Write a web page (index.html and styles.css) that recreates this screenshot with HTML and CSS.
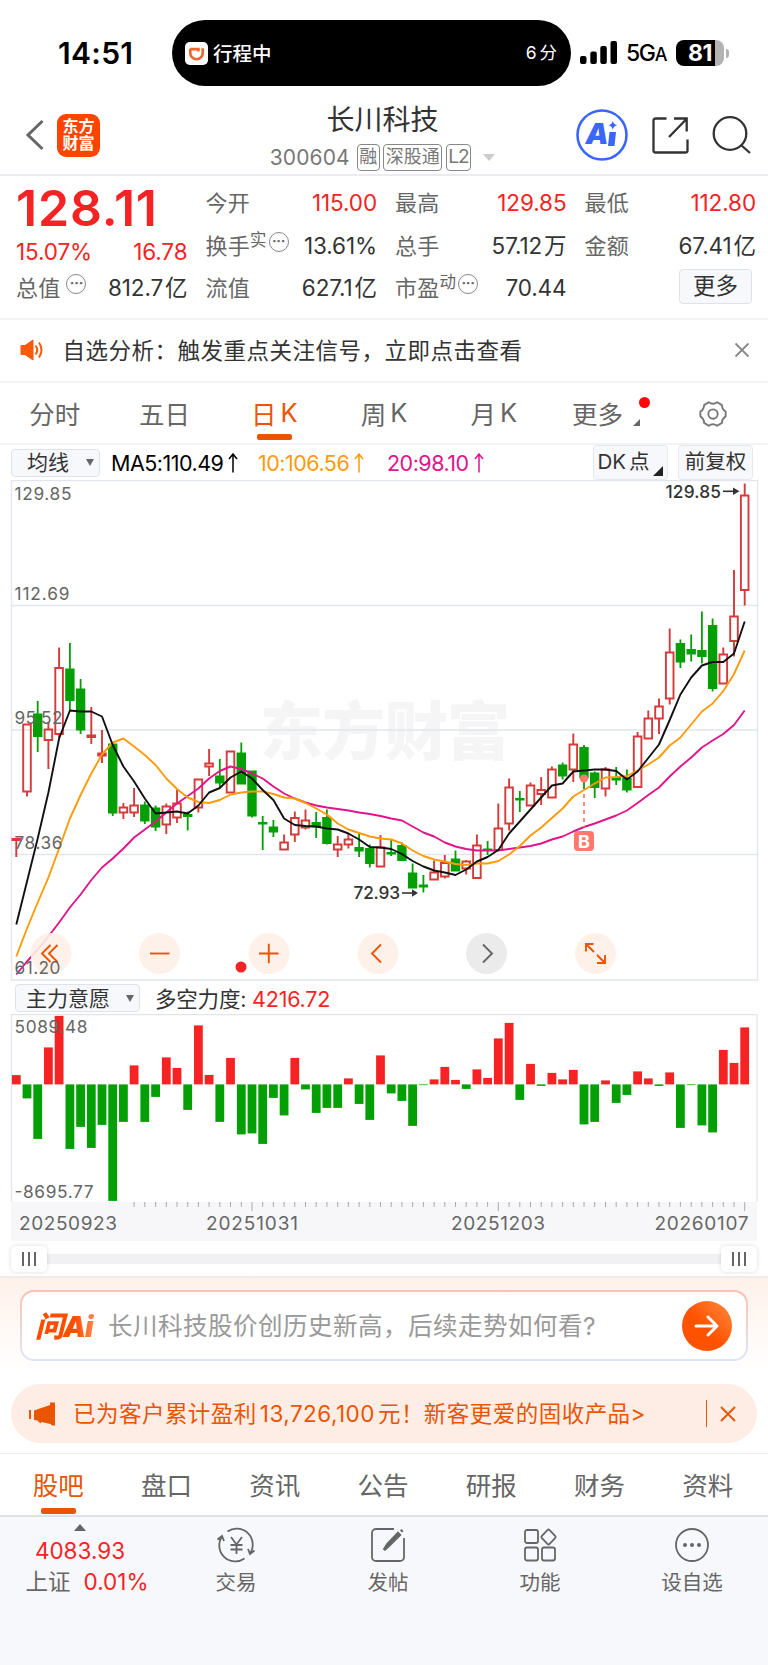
FILE: index.html
```html
<!DOCTYPE html>
<html lang="zh-CN">
<head>
  <meta charset="UTF-8" />
  <meta name="viewport" content="width=device-width, initial-scale=1" />
  <title>长川科技 300604</title>
  <link rel="stylesheet" href="styles.css">
</head>
<body>

  <!-- 状态栏 -->
  <div class="status">
    <span class="clock">14:51</span>
    <div class="island">
      <svg class="ride-icon" viewBox="0 0 24 24" width="23" height="23"><rect width="24" height="24" rx="5" fill="#fff"/><path d="M5.500 7.500H14V10M18.500 6.500V11.500a6.500 6.500 0 0 1-13 0V7" fill="none" stroke="#f0652f" stroke-width="2.800"/></svg>
      <span class="ride">行程中</span>
      <span class="eta">6<i></i>分</span>
    </div>
    <svg class="signal" viewBox="0 0 38 24" width="38" height="24"><rect x="0" y="15" width="6.500" height="8" rx="2"/><rect x="10.300" y="10.500" width="6.500" height="12.500" rx="2"/><rect x="20.300" y="5" width="6.500" height="18" rx="2"/><rect x="30.500" y="0" width="6.500" height="23" rx="2"/></svg>
    <span class="net">5G<small>A</small></span>
    <div class="battery"><span>81</span></div>
    <i class="nub"></i>
  </div>

  <!-- 顶部导航 -->
  <header class="header">
    <div class="side left">
      <svg viewBox="0 0 20 32" width="20" height="32"><path d="M17.500 2 3 16l14.500 14" fill="none" stroke="#666" stroke-width="3"/></svg>
      <div class="logo">东方<br>财富</div>
    </div>
    <div class="stock">
      <h1>长川科技</h1>
      <div class="code"><span class="num">300604</span><b>融</b><b>深股通</b><b class="level">L2</b><i class="caret"></i></div>
    </div>
    <div class="side right">
      <svg viewBox="0 0 52 52" width="52" height="52"><circle cx="26" cy="26" r="24.500" fill="none" stroke="#3a66ff" stroke-width="2.600"/><text x="9.500" y="35.300" class="ai-text" textLength="18">A</text><path d="M33.500 23h6.500l-1.500 14h-6.500z" fill="#3a66ff"/><path d="M36.800 12q.8 3.600 4.500 4.300-3.700.9-4.500 4.500-.8-3.600-4.500-4.500 3.700-.7 4.500-4.300z" fill="#3a66ff"/></svg>
      <svg viewBox="0 0 40 40" width="40" height="40"><path d="M16.500 3.500H5.500a2 2 0 0 0-2 2v30a2 2 0 0 0 2 2h30a2 2 0 0 0 2-2V24.500M24 3.500h12.700V16.500M36.500 4 19 22" fill="none" stroke="#333" stroke-width="2.300"/></svg>
      <svg viewBox="0 0 40 40" width="40" height="40"><circle cx="18" cy="18.500" r="16.300" fill="none" stroke="#333" stroke-width="2.300"/><path d="m29 30 9 8" stroke="#333" stroke-width="2.300"/></svg>
    </div>
  </header>

  <!-- 行情 -->
  <section class="quote">
    <div class="col">
      <div class="price">128.11</div>
      <div class="row change red"><span>15.07%</span><span>16.78</span></div>
      <div class="row"><label>总值<i class="tip">···</i></label><span>812.7<u></u>亿</span></div>
    </div>
    <div class="col">
      <div class="row red"><label>今开</label><span>115.00</span></div>
      <div class="row"><label>换手<sup>实</sup><i class="tip near">···</i></label><span>13.61%</span></div>
      <div class="row"><label>流值</label><span>627.1<u></u>亿</span></div>
    </div>
    <div class="col">
      <div class="row red"><label>最高</label><span>129.85</span></div>
      <div class="row"><label>总手</label><span>57.12<u></u>万</span></div>
      <div class="row"><label>市盈<sup>动</sup><i class="tip near">···</i></label><span>70.44</span></div>
    </div>
    <div class="col">
      <div class="row red"><label>最低</label><span>112.80</span></div>
      <div class="row"><label>金额</label><span>67.41<u></u>亿</span></div>
      <div class="row end"><button class="more">更多</button></div>
    </div>
  </section>

  <section class="notice">
    <svg viewBox="0 0 24 22" width="24" height="24"><path d="M1 6.500h4L13 1v20l-8-5.500H1z" fill="#ff5a0a" stroke="#ff5a0a" stroke-linejoin="round"/><path d="M15.500 6.500q3.500 4.500 0 9M19 3.500q5 7.500 0 15" fill="none" stroke="#ff5a0a" stroke-width="2"/></svg>
    <p>自选分析：触发重点关注信号，立即点击查看</p>
    <svg viewBox="0 0 16 16" width="16" height="16"><path d="m1.500 1.500 13 13m0-13-13 13" stroke="#888" stroke-width="1.800"/></svg>
  </section>

  <nav class="periods">
    <a>分时</a>
    <a>五日</a>
    <a class="on">日<i></i>K</a>
    <a>周<i></i>K</a>
    <a>月<i></i>K</a>
    <a class="drop">更多</a>
    <a><svg viewBox="0 0 32 32" width="30" height="30"><path d="M11.500 3.500Q16 6.500 20.500 3.500L25.500 6.500Q25.500 11 29.500 13.500V18.500Q25.500 21 25.500 25.500L20.500 28.500Q16 25.500 11.500 28.500L6.500 25.500Q6.500 21 2.500 18.500V13.500Q6.500 11 6.500 6.500Z" fill="none" stroke="#777" stroke-width="2" stroke-linejoin="round"/><circle cx="16" cy="16" r="5" fill="none" stroke="#777" stroke-width="2"/></svg></a>
  </nav>

  <!-- 均线 -->
  <div class="ma-bar">
    <div class="select ma">均线<i></i></div>
    <span class="ma5">MA5:110.49<svg viewBox="0 0 10 20" width="10" height="20"><path d="M5 19.500V1M1 6l4-5 4 5"/></svg></span>
    <span class="ma10">10:106.56<svg viewBox="0 0 10 20" width="10" height="20"><path d="M5 19.500V1M1 6l4-5 4 5"/></svg></span>
    <span class="ma20">20:98.10<svg viewBox="0 0 10 20" width="10" height="20"><path d="M5 19.500V1M1 6l4-5 4 5"/></svg></span>
    <div class="chip dk">DK<i></i>点</div>
    <div class="chip">前复权</div>
  </div>

  <svg class="chart" id="kline" viewBox="0 480 768 502" width="768" height="502">
    <text x="385" y="753.500" class="watermark" textLength="250">东方财富</text>
    <path class="grid" d="M11.500 480.500H757.500V980H11.500ZM11.500 605.500H757.500M11.500 730H757.500M11.500 854.500H757.500"/>
    <g id="candles"></g>
    <g id="lines"></g>
    <g class="signal-b">
      <circle cx="584" cy="778.500" r="4"/>
      <path d="M584 794V827" stroke-dasharray="4 4"/>
      <rect x="574" y="831" width="20" height="20" rx="4"/>
      <text x="584" y="847.500">B</text>
    </g>
    <g class="tools">
      <circle cx="51" cy="953.500" r="20.500"/><path d="m50.500 945-8.500 8.500 8.500 8.500m7-17-8.500 8.500 8.500 8.500"/>
      <circle cx="159.500" cy="953.500" r="20.500"/><path d="M150 953.500h19.500"/>
      <circle cx="269" cy="953.500" r="20.500"/><path d="M259 953.500h19.500M268.800 943.700v19.500"/>
      <circle cx="378" cy="953.500" r="20.500"/><path d="m381 944.500-9 9 9 9"/>
      <circle cx="486.500" cy="953.500" r="20.500" class="off"/><path d="m483 944.500 9 9-9 9" class="off"/>
      <circle cx="595.500" cy="953.500" r="20.500"/><path d="m586.500 944.500 7.500 7.500m-8-.5v-7.500h7.500M597 955l7.500 7.500m.5-7.500v8h-8"/>
    </g>
    <circle cx="241" cy="967" r="5.500" fill="#f52323"/>
    <g class="scale">
      <text x="14.500" y="499.500" textLength="57">129.85</text>
      <text x="14.500" y="599.500" textLength="55">112.69</text>
      <text x="14.500" y="724" textLength="48">95.52</text>
      <text x="14.500" y="849" textLength="48">78.36</text>
      <text x="14.500" y="973.500" textLength="46">61.20</text>
    </g>
    <g class="mark">
      <text x="665.500" y="497.500" textLength="55.500">129.85</text>
      <path d="M723 491.300h10" /><path class="tip-fill" d="M733 487.500l6.500 3.800-6.500 3.800z"/>
      <text x="353.500" y="899" textLength="46.500">72.93</text>
      <path d="M402 893h10"/><path class="tip-fill" d="M412 889.200l6 3.800-6 3.800z"/>
    </g>
  </svg>

  <div class="sub-bar">
    <div class="select main">主力意愿<i></i></div>
    <span>多空力度: <em>4216.72</em></span>
  </div>

  <svg class="chart" id="power" viewBox="0 1014 768 227" width="768" height="227">
    <path class="grid" d="M11.500 1202V1014.500H757V1202"/>
    <rect x="11" y="1202" width="746" height="39" fill="#f7f7fa"/>
    <g id="bars"></g>
    <g id="ticks"></g>
    <g class="scale">
      <text x="14.500" y="1032.500" textLength="73">5089.48</text>
      <text x="14.500" y="1198" textLength="79">-8695.77</text>
    </g>
    <g class="dates">
      <text x="19" y="1230" textLength="98">20250923</text>
      <text x="206" y="1230" textLength="92">20251031</text>
      <text x="451" y="1230" textLength="94">20251203</text>
      <text x="654.500" y="1230" textLength="94">20260107</text>
    </g>
  </svg>

  <div class="slider">
    <div class="track"><i class="knob"></i><i class="knob"></i></div>
  </div>

  <!-- 问AI -->
  <section class="ask">
    <div class="ask-box">
      <span class="ask-logo">问Ai</span>
      <p>长川科技股价创历史新高，后续走势如何看?</p>
      <div class="go"><svg viewBox="0 0 26 24" width="26" height="24"><path d="M2 12h21M14 3l9 9-9 9" fill="none" stroke="#fff" stroke-width="3" stroke-linecap="round" stroke-linejoin="round"/></svg></div>
    </div>
  </section>

  <section class="promo">
    <svg viewBox="0 0 28 24" width="28" height="24"><path d="M1 8h2v9H1zM6 8.500 22 3V.5h5V23.500h-3l-1.500-1.500-9-2-1 1.500-3-3-3.500-.5z" fill="#ea5504"/></svg>
    <p>已为客户累计盈利<i></i>13,726,100<i></i>元！新客更爱的固收产品&gt;</p>
    <div class="close"><svg viewBox="0 0 16 16" width="16" height="16"><path d="m1 1 14 14m0-14-14 14" stroke="#ea5504" stroke-width="1.900"/></svg></div>
  </section>

  <nav class="tabs">
    <a class="on">股吧</a><a>盘口</a><a>资讯</a><a>公告</a><a>研报</a><a>财务</a><a>资料</a>
  </nav>

  <footer class="dock">
    <div class="index">
      <i></i>
      <span class="red">4083.93</span>
      <div>上证<span class="red">0.01%</span></div>
    </div>
    <div class="item">
      <svg viewBox="0 0 40 36" width="40" height="36"><path d="M11.500 4.500A16 16 0 0 1 34 26.500M28.500 31.500A16 16 0 0 1 6 9.500M1.500 12.500 6 9l2 5M38.500 23.500 34 27l-2-5M15 10l5.500 7.500L26 10M20.500 17.500V27M14.500 18h12M14.500 22.500h12"/></svg>
      交易
    </div>
    <div class="item">
      <svg viewBox="0 0 36 36" width="36" height="36"><path d="M24 2H6a4 4 0 0 0-4 4v24a4 4 0 0 0 4 4h24a4 4 0 0 0 4-4V11"/><path d="m14 23 3.500-5.500L28 6.500l1.500 1.500L19 18.500zM31 4.500l1.500-1.500" stroke-width="3"/></svg>
      发帖
    </div>
    <div class="item">
      <svg viewBox="0 0 36 36" width="36" height="36"><rect x="3" y="3" width="13" height="13" rx="2"/><rect x="3" y="20.500" width="13" height="13" rx="2"/><rect x="20" y="20.500" width="13" height="13" rx="2"/><path d="M25.400 3.100q1.100-1.200 2.200 0l5.700 6q.8.900 0 1.800l-5.700 6q-1.100 1.200-2.200 0l-5.700-6q-.8-.9 0-1.800z"/></svg>
      功能
    </div>
    <div class="item">
      <svg viewBox="0 0 36 36" width="36" height="36"><circle cx="18" cy="18" r="16"/><g fill="#666" stroke="none"><circle cx="11" cy="18" r="2"/><circle cx="18" cy="18" r="2"/><circle cx="25" cy="18" r="2"/></g></svg>
      设自选
    </div>
  </footer>

  <script src="chart.js"></script>
</body>
</html>
```
FILE: styles.css
```css
:root {
  --red: #f52323;
  --orange: #ea5504;
  --gray: #666;
  --dark: #333;
  --line: #ececf0;
  --panel: #f7f8fb;
}

* {
  margin: 0;
  padding: 0;
  box-sizing: border-box;
}

body {
  width: 768px;
  height: 1665px;
  font-family: Inter, "Noto Sans CJK SC", sans-serif;
  font-weight: 400;
  color: var(--dark);
  background: #fff;
  overflow: hidden;
}

i, em {
  font-style: normal;
}

svg {
  display: block;
  flex-shrink: 0;
}

.red, .red span {
  color: var(--red);
}

/* 状态栏 */
.status {
  display: flex;
  align-items: center;
  height: 86px;
  padding-top: 20px;
  color: #000;
}

.clock {
  width: 172px;
  padding-left: 58px;
  font-size: 30px;
  font-weight: 600;
  letter-spacing: 0.3px;
}

.island {
  display: flex;
  align-items: center;
  width: 399px;
  height: 66px;
  padding: 0 14px 0 13px;
  border-radius: 33px;
  background: #000;
  color: #fff;
  font-size: 19.5px;
}

.ride {
  margin: -2px 0 0 5px;
  font-weight: 500;
}

.eta {
  margin: -3px 0 0 auto;
  font-size: 17.5px;
}

.eta i {
  display: inline-block;
  width: 3px;
}

.signal {
  margin-left: 9px;
}

.net {
  width: 41px;
  margin-left: 8px;
  font-size: 23px;
  font-weight: 500;
  letter-spacing: -1.4px;
  white-space: nowrap;
}

.net small {
  font-size: 18px;
}

.battery {
  width: 48px;
  height: 26px;
  margin-left: 9px;
  border-radius: 8px;
  background: linear-gradient(to right, #000 39px, #b3b3b3 39px);
  color: #fff;
  font-size: 23px;
  font-weight: 700;
  line-height: 26px;
  text-align: center;
  letter-spacing: -0.5px;
}

.nub {
  width: 3px;
  height: 9px;
  margin-left: 2px;
  border-radius: 0 4px 4px 0;
  background: #b3b3b3;
}

/* 顶部导航 */
.header {
  display: flex;
  justify-content: space-between;
  height: 90px;
  border-bottom: 2px solid var(--line);
}

.side {
  display: flex;
  align-items: center;
  width: 200px;
  height: 98px;
}

.left {
  padding-left: 25px;
  gap: 12px;
}

.right {
  justify-content: flex-end;
  padding-right: 16px;
  gap: 22px;
}

.logo {
  width: 43px;
  height: 43px;
  padding-top: 4px;
  border-radius: 9px;
  background: #ff4400;
  color: #fff;
  font-size: 16px;
  font-weight: 700;
  line-height: 17.5px;
  text-align: center;
}

.ai-text {
  font-size: 29px;
  font-weight: 900;
  font-style: italic;
  fill: #3a66ff;
}

.stock {
  display: flex;
  flex-direction: column;
  align-items: center;
}

.stock h1 {
  margin-top: 14px;
  padding-right: 3px;
  font-size: 28px;
  font-weight: 400;
  line-height: 40px;
}

.code {
  display: flex;
  align-items: center;
  margin-top: 4px;
  color: #777;
}

.code .num {
  width: 87px;
  font-size: 21px;
  letter-spacing: 0.1px;
}

.code b {
  height: 27px;
  margin-right: 3.5px;
  padding: 0 1.5px;
  border: 1.5px solid #888;
  border-radius: 4px;
  font-size: 18px;
  font-weight: 400;
  line-height: 23px;
}

.code .level {
  width: 25px;
  font-size: 19px;
  text-align: center;
  letter-spacing: -1px;
}

.caret {
  margin: 0 3px 0 9px;
  border: 6.5px solid transparent;
  border-top: 7px solid #ccc;
  border-bottom: 0;
}

/* 行情 */
.quote {
  display: grid;
  grid-template-columns: repeat(4, 1fr);
  gap: 18px;
  height: 144px;
  padding: 6px 12px 0 16px;
  border-bottom: 2px solid #f3f3f6;
}

.row {
  display: flex;
  align-items: center;
  justify-content: space-between;
  height: 42.5px;
  font-size: 22.5px;
  letter-spacing: -0.1px;
  white-space: nowrap;
}

.row label {
  display: flex;
  align-items: center;
  color: var(--gray);
  font-size: 22px;
  line-height: 30px;
  letter-spacing: 0.2px;
}

.row span {
  line-height: 30px;
}

.row u {
  display: inline-block;
  width: 2px;
}

.row sup {
  align-self: flex-start;
  margin-top: -3px;
  font-size: 16.5px;
  line-height: 24px;
}

.tip {
  width: 20px;
  height: 20px;
  margin: -8px 0 0 6px;
  border: 1.5px solid #888;
  border-radius: 50%;
  font-size: 14px;
  font-weight: 700;
  line-height: 16px;
  text-align: center;
  letter-spacing: -0.2px;
}

.tip.near {
  margin-left: 2px;
}

.price {
  height: 48px;
  padding-top: 1px;
  color: var(--red);
  font-size: 50px;
  font-weight: 600;
  line-height: 50px;
  letter-spacing: 0.8px;
}

.change {
  height: 37px;
  padding-top: 6px;
}

.end {
  justify-content: flex-end;
  padding-right: 4px;
}

.more {
  width: 73px;
  height: 35px;
  margin-top: -4px;
  border: 1.5px solid #dfe2ea;
  border-radius: 4px;
  background: var(--panel);
  color: var(--dark);
  font-family: inherit;
  font-size: 22.5px;
  line-height: 30px;
}

/* 自选分析提示 */
.notice {
  display: flex;
  align-items: center;
  height: 63px;
  padding: 0 18px 2px 20px;
  border-bottom: 2px solid #f3f3f6;
}

.notice p {
  flex: 1;
  margin-top: -2px;
  padding-left: 18.5px;
  font-size: 22.5px;
  letter-spacing: 0.5px;
}

/* K线周期 */
.periods {
  display: grid;
  grid-template-columns: repeat(7, 1fr);
  height: 62px;
  border-bottom: 2px solid #f3f3f6;
}

.periods a {
  position: relative;
  display: flex;
  align-items: center;
  justify-content: center;
  padding-bottom: 2px;
  color: var(--gray);
  font-size: 25.5px;
}

.periods svg {
  margin-top: 3px;
}

.periods a i {
  width: 4px;
}

.periods .on, .tabs .on {
  color: var(--orange);
}

.on::after {
  content: '';
  position: absolute;
  bottom: 3px;
  left: 50%;
  width: 35px;
  height: 6px;
  margin-left: -17px;
  border-radius: 2px;
  background: var(--orange);
}

.periods .drop {
  padding-right: 12px;
}

.drop::before {
  content: '';
  position: absolute;
  top: 14px;
  left: 90px;
  width: 11px;
  height: 11px;
  border-radius: 50%;
  background: #ff0a0a;
}

.drop::after {
  content: '';
  position: absolute;
  top: 36px;
  left: 84px;
  border-bottom: 7px solid var(--gray);
  border-left: 7px solid transparent;
}

/* 均线 */
.ma-bar, .sub-bar {
  display: flex;
  align-items: center;
  white-space: nowrap;
}

.ma-bar {
  height: 35px;
  padding: 0 15px 0 11px;
  font-size: 21.5px;
  letter-spacing: -0.5px;
}

.select {
  display: flex;
  align-items: center;
  justify-content: space-between;
  height: 28px;
  border: 1.5px solid #dfe2ea;
  border-radius: 4px;
  background: var(--panel);
  color: var(--dark);
  font-size: 21px;
  line-height: 23px;
  letter-spacing: 0;
}

.select i {
  border: 4.5px solid transparent;
  border-top: 7px solid var(--gray);
  border-bottom: 0;
}

.select.ma {
  width: 89px;
  margin-right: 11px;
  padding: 0 5px 0 15px;
}

.ma-bar span {
  display: flex;
  align-items: center;
}

.ma-bar span svg {
  margin-left: 5px;
  fill: none;
  stroke: currentColor;
  stroke-width: 1.5;
}

.ma5 {
  width: 147px;
  color: #000;
}

.ma10 {
  width: 129px;
  color: #ff9a0a;
}

.ma20 {
  color: #e0148c;
}

.chip {
  position: relative;
  width: 75px;
  height: 35px;
  border: 1.5px solid #e6e8ef;
  border-radius: 4px;
  background: var(--panel);
  font-size: 20.5px;
  line-height: 32px;
  text-align: center;
  letter-spacing: 0;
}

.chip.dk {
  margin: 0 10px 0 auto;
  padding-right: 14px;
}

.chip i {
  display: inline-block;
  width: 3px;
}

.dk::after {
  content: '';
  position: absolute;
  right: 4px;
  bottom: 3px;
  border-bottom: 10px solid #222;
  border-left: 10px solid transparent;
}

/* 图表 */
.grid {
  fill: none;
  stroke: #e2e5ee;
  stroke-width: 1.3;
}

.watermark {
  fill: #f5f5f5;
  font-size: 63px;
  font-weight: 900;
  text-anchor: middle;
}

.up {
  fill: none;
  stroke: #d63a3a;
  stroke-width: 1.9;
}

.down {
  fill: #049f04;
  stroke: #049f04;
  stroke-width: 1.8;
}

.ma-line {
  fill: none;
  stroke-width: 1.9;
  stroke-linejoin: round;
}

.scale {
  fill: var(--gray);
  font-size: 17.3px;
}

.dates {
  fill: var(--gray);
  font-size: 19px;
}

.mark {
  fill: var(--dark);
  stroke: none;
  font-size: 17.3px;
  font-weight: 500;
}

.mark path {
  stroke: var(--dark);
  stroke-width: 1.6;
}

.mark .tip-fill {
  stroke: none;
}

.signal-b {
  fill: #ff7a6b;
}

.signal-b path {
  stroke: #ff7a6b;
  stroke-width: 1.7;
}

.signal-b text {
  fill: #fff;
  font-size: 18px;
  font-weight: 700;
  text-anchor: middle;
}

.tools circle {
  fill: #feefe7;
  fill-opacity: 0.9;
}

.tools circle.off {
  fill: #e9e9e9;
}

.tools path {
  fill: none;
  stroke: var(--orange);
  stroke-width: 1.9;
}

.tools path.off {
  stroke: var(--gray);
}

.tick {
  stroke: #aaa;
  stroke-width: 1;
}

/* 主力意愿 */
.sub-bar {
  height: 32px;
  padding: 0 0 0 15px;
}

.select.main {
  width: 125px;
  margin-right: 15px;
  padding: 0 5px 0 10px;
}

.sub-bar span {
  margin-top: -2px;
  font-size: 21.5px;
  letter-spacing: -0.2px;
}

.sub-bar em {
  color: var(--red);
}

/* 区间滑块 */
.slider {
  height: 37px;
  padding: 13px 11px 0;
  border-bottom: 2px solid var(--line);
}

.track {
  display: flex;
  align-items: center;
  justify-content: space-between;
  height: 10px;
  background: #f1f1f4;
}

.knob {
  display: flex;
  align-items: center;
  justify-content: center;
  width: 36px;
  height: 26px;
  border-radius: 5px;
  background: #fff;
  box-shadow: 0 0 4px rgba(0, 0, 0, 0.15);
}

.knob::before {
  content: '';
  width: 14px;
  height: 14px;
  background: repeating-linear-gradient(to right, var(--gray) 0 2px, transparent 2px 6px);
}

/* 问AI */
.ask {
  height: 106px;
  padding: 12px 20px 0;
  background: linear-gradient(#fff1ea, #fff 95px);
}

.ask-box {
  display: flex;
  align-items: center;
  height: 71px;
  padding: 0 14px 0 13px;
  border: 2px solid transparent;
  border-radius: 14px;
  background: linear-gradient(#fff, #fff) padding-box, linear-gradient(#ffc0b0, #dfe6f8) border-box;
}

.ask-logo {
  width: 73px;
  margin-top: -3px;
  background: linear-gradient(to right, #ff4d00 40px, #ff8a50 60px);
  -webkit-background-clip: text;
  background-clip: text;
  color: transparent;
  font-size: 29px;
  font-weight: 900;
  font-style: italic;
  letter-spacing: -1px;
}

.ask-box p {
  flex: 1;
  margin-top: -3px;
  color: #999;
  font-size: 24.5px;
  letter-spacing: 0.5px;
  white-space: nowrap;
}

.go {
  display: flex;
  align-items: center;
  justify-content: center;
  width: 50px;
  height: 50px;
  border-radius: 50%;
  background: linear-gradient(45deg, #ff5200 45%, #ff8c42);
}

/* 推广条 */
.promo {
  display: flex;
  align-items: center;
  height: 59px;
  margin: 0 11px 10px;
  padding: 0 21px 0 17px;
  border-radius: 30px;
  background: #feede5;
  color: var(--orange);
}

.promo p {
  flex: 1;
  margin-top: -3px;
  padding-left: 17px;
  font-size: 22.5px;
  letter-spacing: 0.47px;
  white-space: nowrap;
}

.promo p i {
  display: inline-block;
  width: 3px;
}

.close {
  display: flex;
  align-items: center;
  height: 27px;
  padding-left: 13px;
  border-left: 1.5px solid var(--orange);
}

/* 资讯标签 */
.tabs {
  display: grid;
  grid-template-columns: repeat(7, 1fr);
  height: 64px;
  padding: 0 6px 0 4px;
  border-top: 1.5px solid var(--line);
  border-bottom: 2px solid #dfe1e6;
}

.tabs a {
  position: relative;
  color: var(--gray);
  font-size: 25.5px;
  line-height: 63px;
  text-align: center;
}

.tabs .on::after {
  bottom: 3px;
}

/* 底部栏 */
.dock {
  display: grid;
  grid-template-columns: 160px repeat(4, 152px);
  height: 148px;
  background: var(--panel);
  color: var(--gray);
}

.index {
  display: flex;
  flex-direction: column;
  align-items: center;
  padding-top: 7px;
  font-size: 22.5px;
  line-height: 32px;
}

.index i {
  margin-bottom: 4px;
  border: 6px solid transparent;
  border-top: 0;
  border-bottom: 7px solid var(--gray);
}

.index div {
  margin-top: -1px;
  padding-left: 14px;
}

.index div span {
  margin-left: 13px;
}

.item {
  display: flex;
  flex-direction: column;
  align-items: center;
  padding-top: 10px;
  font-size: 20.5px;
  line-height: 30px;
}

.item svg {
  margin-bottom: 5px;
  fill: none;
  stroke: var(--gray);
  stroke-width: 1.8;
}
```
FILE: chart.js
```js
const X0 = 16.3;
const STEP = 10.712;
const TOP = 480;

// [方向, 最高, 实体上沿, 实体下沿, 最低]
const candles = [
  ['r', 359, 359, 360, 377], ['r', 244, 244.5, 311.5, 316.5], ['g', 221, 234.5, 256, 272],
  ['r', 242, 249.5, 260, 289], ['r', 167.5, 188, 254, 258], ['g', 163, 189.5, 220, 231],
  ['g', 199, 209.5, 249.5, 254], ['r', 227, 255.5, 257, 264], ['r', 250, 273.5, 275.5, 283],
  ['g', 264.5, 264.5, 332.5, 336], ['r', 323, 327.5, 332.5, 339], ['r', 308, 325.5, 332.5, 337],
  ['g', 321.5, 325.5, 340.5, 344], ['g', 325.5, 328.5, 346.5, 351], ['r', 323.5, 326.5, 344.5, 354],
  ['r', 309.5, 323.5, 337.5, 343], ['g', 331.5, 335, 336, 350.5], ['r', 298.5, 299.5, 327.5, 332.5],
  ['r', 269, 283.5, 286.5, 296], ['g', 279, 296.5, 302.5, 307.5], ['r', 271, 271.5, 312.5, 313],
  ['g', 262.5, 273.5, 303.5, 303.5], ['g', 291.5, 291.5, 335.5, 337.5], ['g', 336, 343, 343.5, 370],
  ['g', 340, 347.5, 351.5, 357], ['r', 354.5, 362.5, 369.5, 370.5], ['r', 331.5, 338, 354.5, 362],
  ['r', 329.5, 340.5, 347.5, 349.5], ['g', 332, 343, 346.5, 358], ['g', 329.5, 338, 363, 364.5],
  ['r', 356, 364.5, 369.5, 377], ['r', 353.5, 359.5, 364.5, 368.5], ['g', 353.5, 368, 370.5, 377],
  ['g', 364.5, 369, 383, 387.5], ['r', 355, 367.5, 386.5, 386.5], ['g', 359, 373, 373.5, 376],
  ['g', 362.5, 366, 380, 381], ['g', 383.5, 393.5, 407.5, 408], ['g', 395, 405.5, 406.5, 412.5],
  ['r', 380.5, 392.5, 399.5, 400.5], ['r', 375, 383, 396.5, 398.5], ['g', 370.5, 379.5, 390.5, 391.5],
  ['r', 380, 381.5, 388.5, 394.5], ['r', 354.5, 365.5, 398, 398], ['g', 361, 369.5, 370, 375],
  ['r', 323.5, 348.5, 370, 370], ['r', 298.5, 307.5, 343.5, 350.5], ['g', 311, 319, 319.5, 332],
  ['r', 302.5, 305.5, 325.5, 326.5], ['r', 297, 310, 314, 325], ['r', 286.5, 289.5, 317.5, 317.5],
  ['g', 282.5, 285.5, 295.5, 299.5], ['r', 253.5, 264.5, 289.5, 302], ['g', 265, 268, 297.5, 309],
  ['g', 291.5, 293.5, 307, 318], ['r', 287, 289.5, 308.5, 316.5], ['g', 287, 298, 299.5, 305],
  ['g', 289.5, 299, 309.5, 312.5], ['r', 252, 256.5, 307, 307], ['r', 230.5, 238.5, 258.5, 258.5],
  ['r', 218.5, 226.5, 238.5, 254], ['r', 148.5, 172.5, 218.5, 224.5], ['g', 159.5, 164, 181.5, 188],
  ['g', 154.5, 170, 173.5, 181.5], ['g', 131.5, 171, 176, 183.5], ['g', 138.5, 146, 208, 211.5],
  ['r', 167.5, 174.5, 203.5, 203.5], ['r', 90, 136.5, 161, 176.5], ['r', 3.5, 15.5, 110, 125.5]
];

const lines = {
  '#e0148c': [494.5, 481.5, 469.5, 456.5, 442.5, 427.5, 414.5, 400, 387.5, 378.5, 368.5, 357.5, 349.5, 341.5, 332.5, 323.5, 316, 308.5, 298.5, 291, 286.5, 289, 293.5, 298.5, 306.5, 313.5, 318.5, 322.5, 325.5, 327.5, 329, 330.5, 332.5, 334, 336, 338.5, 340.5, 346.5, 352.5, 356.5, 362.5, 366.5, 369, 370.5, 370.5, 370.5, 369, 367.5, 366, 363.5, 359.5, 356.5, 351.5, 347, 343.5, 339.5, 335.5, 330.5, 323, 315, 307.5, 296.5, 286.5, 277.5, 267.5, 260.5, 254, 245, 230.5],
  '#ff9a0a': [476.5, 448.5, 422.5, 397.5, 368.5, 338.5, 315, 293.5, 274.5, 262.5, 258.5, 266.5, 275, 285, 298.5, 309, 317.5, 322, 323, 320, 314.5, 312.5, 311.5, 311.5, 314, 317.5, 318.5, 323, 328.5, 334.5, 343.5, 349.5, 353, 356.5, 358.5, 359.5, 363.5, 370.5, 376, 379.5, 381.5, 384, 385, 383.5, 383.5, 381, 374.5, 366, 355.5, 347.5, 338, 328.5, 316.5, 310, 303.5, 297.5, 297, 296, 290.5, 284.5, 277.5, 265.5, 257.5, 244.5, 231.5, 223.5, 211, 194, 170.5],
  '#111': [444.5, 401.5, 358.5, 312.5, 258.5, 230.5, 231.5, 231.5, 236.5, 265, 286.5, 301.5, 318.5, 333.5, 332.5, 331.5, 333.5, 325.5, 312.5, 308, 297.5, 291.5, 298.5, 310, 320, 338.5, 345, 346, 346.5, 348.5, 349.5, 353.5, 359.5, 367, 367.5, 369, 374, 381, 386.5, 390.5, 392.5, 395, 389.5, 381.5, 377, 370, 353.5, 341.5, 329.5, 317.5, 305.5, 303.5, 291.5, 290.5, 289.5, 289.5, 291, 299.5, 291.5, 278, 264.5, 240, 214.5, 197.5, 185.5, 182, 182, 173.5, 141.5]
};

const power = [
  9.3, -14, -54.5, 37, 68.5, -64.5, -42.5, -63.5, -40.5, -116.5, -37.5, 19, -37.5, -12.5, 27, 16.5,
  -25.5, 59, 9.5, -37.5, 26.5, -50, -49, -59.5, -13.5, -31, 26.5, -5, -28.5, -23.5, -23.5, 6, -19.5,
  -35.5, 29, -9, -16.5, -41.5, -0.5, 5, 17.5, 4.5, -4.5, 15, 6.5, 46, 61.5, -15.5, 20.5, -1.5, 11.5,
  5, 14.5, -40, -37.5, 4, -18.5, -10.5, 13, 6, -1.5, 12, -43.5, -0.5, -41, -48, 34.5, 21.5, 57
];

const x = i => X0 + i * STEP;

// K线
document.getElementById('candles').innerHTML = candles.map(([dir, high, top, bottom, low], i) => {
  const cx = x(i).toFixed(1);
  const left = (x(i) - 3.8).toFixed(1);
  return `<path class="${dir === 'r' ? 'up' : 'down'}" d="M${cx} ${TOP + high}V${TOP + top}M${cx} ${TOP + bottom}V${TOP + low}M${left} ${TOP + top}h7.600V${TOP + bottom}h-7.600Z"/>`;
}).join('');

// 均线
document.getElementById('lines').innerHTML = Object.entries(lines).map(([color, ys]) => {
  const points = ys.map((y, i) => `${x(i).toFixed(1)},${TOP + y}`).join(' ');
  return `<polyline class="ma-line" stroke="${color}" points="${points}"/>`;
}).join('');

// 多空力度
const ZERO = 1084.4;
document.getElementById('bars').innerHTML = power.map((v, i) => {
  const y = v > 0 ? ZERO - v : ZERO;
  const h = Math.max(Math.abs(v), 0.7);
  return `<rect x="${(x(i) - 4.4).toFixed(1)}" y="${y}" width="8.800" height="${h}" fill="${v > 0 ? '#f52323' : '#049f04'}"/>`;
}).join('');

// 时间刻度
let ticks = '';
for (let i = 11; i < power.length; i++) {
  const big = i === 22 || i === 45 || i === 68;
  ticks += `<path class="tick" d="M${x(i).toFixed(1)} 1202v${big ? 9 : 5}"/>`;
}
document.getElementById('ticks').innerHTML = ticks;
```
